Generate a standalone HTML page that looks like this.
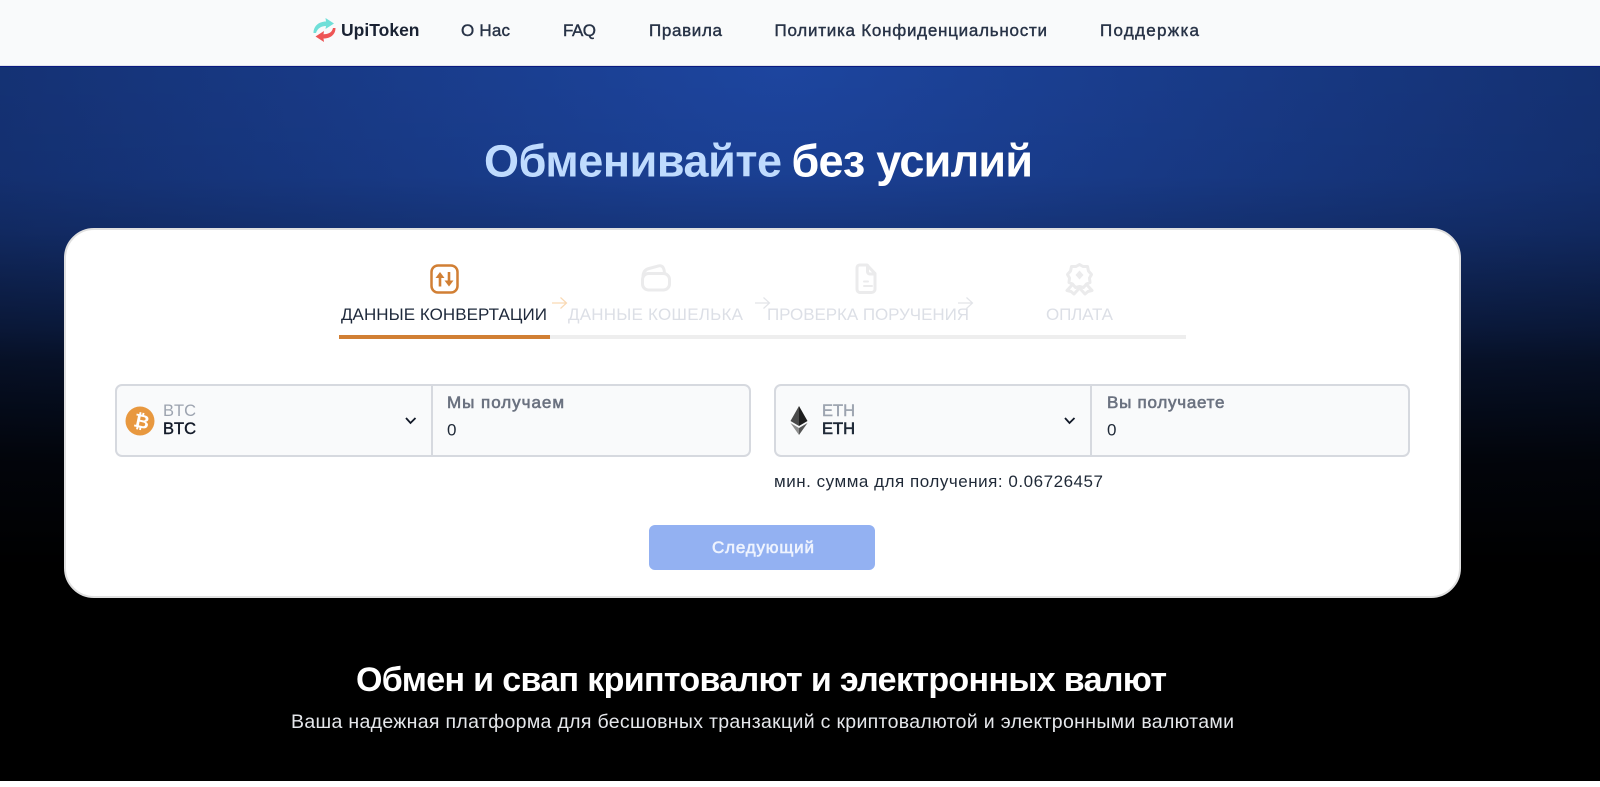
<!DOCTYPE html>
<html lang="ru"><head><meta charset="utf-8"><title>UpiToken</title>
<style>
html,body{margin:0;padding:0;width:1600px;height:787px;overflow:hidden;background:#fff}
body{position:relative;font-family:"Liberation Sans",sans-serif}
.a{position:absolute;box-sizing:border-box}
svg{position:absolute;left:0;top:0}
text{font-family:"Liberation Sans",sans-serif}
.m{stroke-width:.4px;paint-order:stroke}
.s{stroke-width:.6px;paint-order:stroke}
</style></head><body>
<div class="a" style="left:0;top:0;width:1600px;height:66px;background:#f9fafb;border-bottom:1px solid #e1e4ea"></div>
<div class="a" style="left:0;top:66px;width:1600px;height:715px;border-top:1px solid #0a1a80;background:linear-gradient(rgba(0,0,0,0) 0,rgba(0,0,0,.04) 110px,rgba(0,0,0,.16) 165px,rgba(0,0,0,.5) 260px,rgba(0,0,0,.66) 294px,rgba(0,0,0,.9) 393px,#000 500px),radial-gradient(ellipse 1000px 760px at 780px 0,#1d459f 0%,#122c68 100%)"></div>
<div class="a" style="left:64px;top:228px;width:1397px;height:370px;background:#fff;border-radius:30px;border:2px solid #e0e0e0"></div>
<div class="a" style="left:339px;top:335px;width:847px;height:4px;background:#eeeeee"></div>
<div class="a" style="left:339px;top:335px;width:211px;height:4px;background:#d17f34"></div>
<div class="a" style="left:115px;top:384px;width:636px;height:73px;background:#f9fafb;border:2px solid #d6d9df;border-radius:7px"></div>
<div class="a" style="left:431px;top:385px;width:2px;height:71px;background:#d6d9df"></div>
<div class="a" style="left:774px;top:384px;width:636px;height:73px;background:#f9fafb;border:2px solid #d6d9df;border-radius:7px"></div>
<div class="a" style="left:1090px;top:385px;width:2px;height:71px;background:#d6d9df"></div>
<div class="a" style="left:649px;top:525px;width:226px;height:45px;background:#93b1f2;border-radius:6px"></div>

<svg width="1600" height="787" viewBox="0 0 1600 787" xmlns="http://www.w3.org/2000/svg">
<!-- logo -->
<path d="M313.500 33C313.500 26 319 21.500 326 21.500L325.500 18L334 23.500L325.500 29L326 26C321 26 317.500 28.500 316 33Z" fill="#6fdfd8"/>
<path d="M335.500 28C335.500 35 330 38.500 323.500 38.500L324 42L315.500 36.500L324 31L323.500 34.200C328.500 34.200 332 32.500 333 28Z" fill="#ee5555"/>
<text x="341" y="36" font-size="17.500" font-weight="700" fill="#1a2233" textLength="78.500">UpiToken</text>
<g font-size="17" fill="#273246" stroke="#273246">
<text class="m" x="461" y="36" textLength="49">О Нас</text>
<text class="m" x="563" y="36" textLength="33">FAQ</text>
<text class="m" x="649" y="36" textLength="73">Правила</text>
<text class="m" x="774.500" y="36" textLength="272.500">Политика Конфиденциальности</text>
<text class="m" x="1100" y="36" textLength="99">Поддержка</text>
</g>

<text x="484" y="176.500" font-size="45" font-weight="700" fill="#bfdbfe" textLength="298">Обменивайте</text>
<text x="791.500" y="176.500" font-size="45" font-weight="700" fill="#ffffff" textLength="241.500">без усилий</text>

<!-- step icons -->
<rect x="431.500" y="265.500" width="26" height="27" rx="6.500" fill="none" stroke="#d17f34" stroke-width="2.500"/>
<path d="M440 286.500V276" fill="none" stroke="#d17f34" stroke-width="2.600"/>
<path d="M435.500 278L440 272L444.500 278Z" fill="#d17f34"/>
<path d="M449 272V282" fill="none" stroke="#d17f34" stroke-width="2.600"/>
<path d="M444.500 280.500L449 286.500L453.500 280.500Z" fill="#d17f34"/>
<g fill="none" stroke="#ebebec" stroke-width="3" stroke-linejoin="round" stroke-linecap="round">
<rect x="642.500" y="273.500" width="27" height="16.500" rx="6"/>
<path d="M643 277C643 272 645 269.500 649 268.500L659 265.800C662 265.300 664 267 664.500 273"/>
<path d="M860 265H867L875 273.500V289C875 291 873.500 292.500 871.500 292.500H860C858 292.500 857 291 857 289V268.500C857 266 858 265 860 265Z"/>
<path d="M867.500 265.500V271.500C867.500 273 868.500 274 870 274H875" />
<path d="M864 281.500H868M864 286H872" stroke-width="2"/>
<path d="M1079.500 264.500L1083 266.500L1087.500 266.500L1088.500 271L1091.500 274.500L1089.500 278L1090 282.500L1086.500 284L1083.500 287.500L1079.500 286.500L1075.500 287.500L1072.500 284L1069 282.500L1069.500 278L1067.500 274.500L1070.500 271L1071.500 266.500L1076 266.500Z"/>
<path d="M1072 285L1067 290.500L1071 291.500L1074 294L1079.500 288M1087 285L1092 290.500L1088 291.500L1085 294L1079.500 288"/>
</g>
<path d="M1079.500 270.500L1083.500 275L1079.500 279.500L1075.500 275Z" fill="#ebebec"/>

<!-- arrows -->
<g fill="none" stroke-width="1.200">
<path d="M552 303H566.500M560.500 297.500L566.500 303L560.500 308.500" stroke="#f9d9b4"/>
<path d="M755 303H769.500M763.500 297.500L769.500 303L763.500 308.500" stroke="#e2e4e8"/>
<path d="M958 303H972.500M966.500 297.500L972.500 303L966.500 308.500" stroke="#e2e4e8"/>
</g>

<text x="341" y="320" font-size="17" fill="#1e293b" textLength="206">ДАННЫЕ КОНВЕРТАЦИИ</text>
<text x="568" y="320" font-size="17" fill="#dcdfe6" textLength="175">ДАННЫЕ КОШЕЛЬКА</text>
<text x="767" y="320" font-size="17" fill="#dcdfe6" textLength="202">ПРОВЕРКА ПОРУЧЕНИЯ</text>
<text x="1046" y="320" font-size="17" fill="#dcdfe6" textLength="67">ОПЛАТА</text>

<!-- BTC -->
<circle cx="140" cy="421" r="14.500" fill="#e8983f"/>
<text x="134" y="427.500" font-size="19" font-weight="700" fill="#fff" transform="rotate(12 140 421)">₿</text>
<text x="163" y="416" font-size="16.500" fill="#9ca3af" textLength="33">BTC</text>
<text x="163" y="434" font-size="16.500" fill="#111827" stroke="#111827" class="m" textLength="33">BTC</text>
<path d="M406 418L410.500 423L415.500 418" fill="none" stroke="#111827" stroke-width="1.800"/>
<text x="447" y="408" font-size="17" fill="#6b7280" stroke="#6b7280" class="s" textLength="117">Мы получаем</text>
<text x="447" y="435.500" font-size="17" fill="#1f2937">0</text>

<!-- ETH -->
<path d="M799 406L790.500 421L799 426Z" fill="#4a4a4a"/>
<path d="M799 406L807.500 421L799 426Z" fill="#1e1e1e"/>
<path d="M790.500 423L799 428V435Z" fill="#8e8e8e"/>
<path d="M807.500 423L799 428V435Z" fill="#555"/>
<text x="822" y="416" font-size="16.500" fill="#9ca3af" stroke="#9ca3af" class="m" textLength="33">ETH</text>
<text x="822" y="434" font-size="16.500" fill="#1f2937" stroke="#1f2937" class="s" textLength="33">ETH</text>
<path d="M1065 418L1069.500 423L1074.500 418" fill="none" stroke="#111827" stroke-width="1.800"/>
<text x="1107" y="408" font-size="17" fill="#6b7280" stroke="#6b7280" class="s" textLength="117.500">Вы получаете</text>
<text x="1107" y="435.500" font-size="17" fill="#1f2937">0</text>

<text x="774" y="487" font-size="17" fill="#1f2937" textLength="329">мин. сумма для получения: 0.06726457</text>
<text x="712" y="553" font-size="17" fill="#eef3fe" stroke="#eef3fe" class="s" textLength="102">Следующий</text>

<text x="356" y="691" font-size="34" font-weight="700" fill="#ffffff" textLength="811">Обмен и свап криптовалют и электронных валют</text>
<text x="291" y="728" font-size="19.500" fill="#e5e7eb" textLength="943">Ваша надежная платформа для бесшовных транзакций с криптовалютой и электронными валютами</text>
</svg>
</body></html>
